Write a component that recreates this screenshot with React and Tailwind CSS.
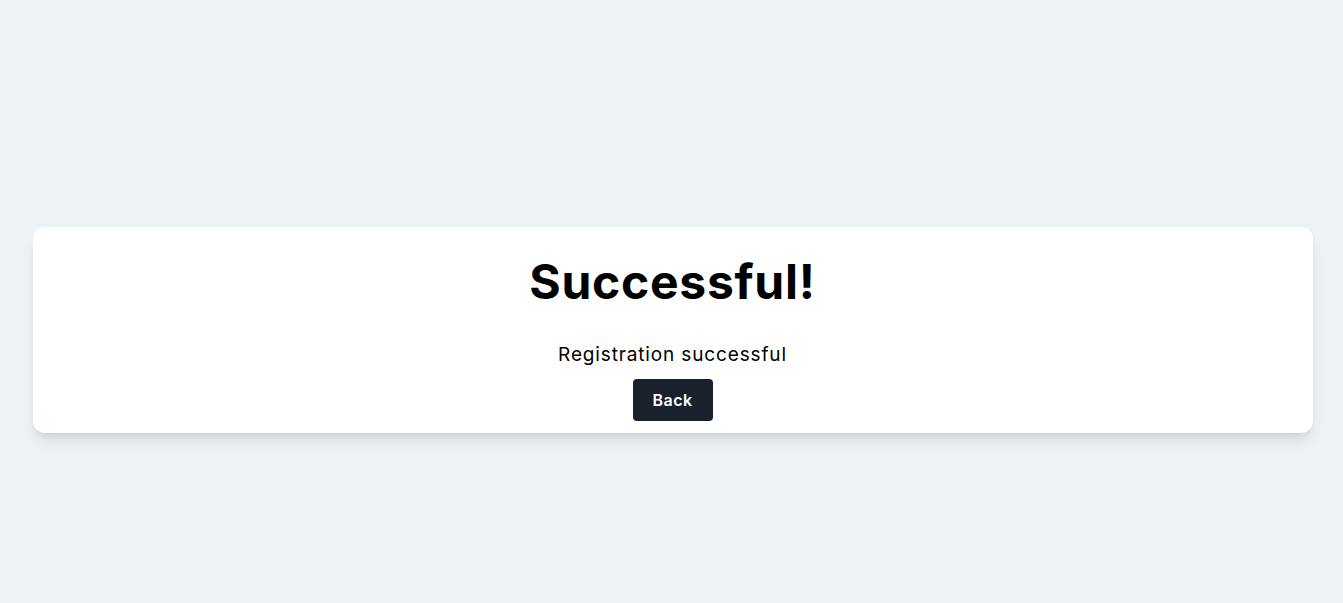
export default function App() {
  return (
    <div className="min-h-screen bg-[#edf2f7] pt-[57px] pl-[2px] flex items-center justify-center font-['Inter',sans-serif] text-black">
      <div className="w-[1280px] bg-white rounded-xl shadow-lg px-6 pt-[26px] pb-3 flex flex-col items-center">
        <h1 className="text-5xl font-bold leading-[58px] tracking-[0.015em]">Successful!</h1>
        <p className="mt-[31px] text-[19px] leading-[26px] tracking-[0.045em]">Registration successful</p>
        <button className="mt-[11px] w-20 h-[42px] rounded bg-[#1a202c] text-white font-semibold text-base tracking-[0.03em]">
          Back
        </button>
      </div>
    </div>
  );
}
